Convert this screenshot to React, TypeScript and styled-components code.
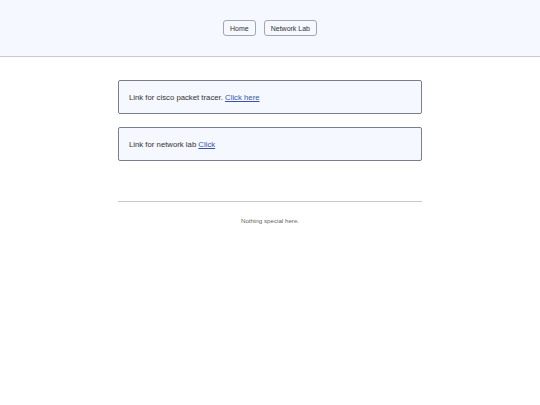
import styled, { createGlobalStyle } from 'styled-components'

const GlobalStyle = createGlobalStyle`
  body {
    margin: 0;
    font-family: "Liberation Sans", Arial, sans-serif;
    background: #ffffff;
    color: #333333;
  }
`

const Header = styled.header`
  display: flex;
  justify-content: center;
  align-items: center;
  gap: 8px;
  height: 56px;
  background-color: #f5f8fe;
  border-bottom: 1px solid #c9c9d2;
`
const NavButton = styled.button`
  height: 16px;
  padding: 0 6px;
  font-family: inherit;
  font-size: 7px;
  color: #333333;
  background-color: #f5f8fe;
  border: 1px solid #a3a5b0;
  border-radius: 3px;
`
const Main = styled.main`
  display: flex;
  flex-direction: column;
  gap: 13px;
  width: 304px;
  margin: 23px auto 0;
`
const Card = styled.div`
  display: flex;
  align-items: center;
  height: 34px;
  padding: 0 10px;
  box-sizing: border-box;
  font-size: 7.75px;
  white-space: pre;
  background-color: #f5f8fe;
  border: 1px solid #7a7d8e;
  border-radius: 2px;
`
const CardLink = styled.a`
  color: #3556a8;
  text-decoration: underline;
`
const Footer = styled.footer`
  width: 304px;
  margin: 40px auto 0;
  padding-top: 15px;
  font-size: 6.2px;
  color: #666666;
  text-align: center;
  border-top: 1px solid #c9c9cc;
`

const App = () => {
  return (
    <>
      <GlobalStyle />
      <Header>
        <NavButton>Home</NavButton>
        <NavButton>Network Lab</NavButton>
      </Header>
      <Main>
        <Card>
          {'Link for cisco packet tracer. '}
          <CardLink href="#">Click here</CardLink>
        </Card>
        <Card>
          {'Link for network lab '}
          <CardLink href="#">Click</CardLink>
        </Card>
      </Main>
      <Footer>Nothing special here.</Footer>
    </>
  )
}

export default App
